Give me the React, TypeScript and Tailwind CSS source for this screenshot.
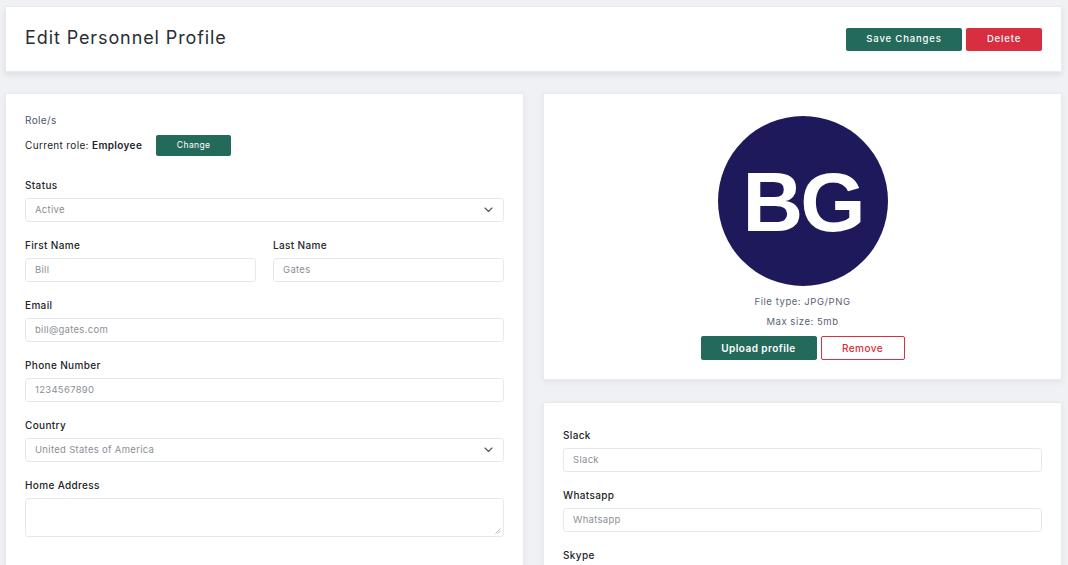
import React from "react";

const font = { fontFamily: "Inter, 'Noto Sans', sans-serif" };

function Chevron() {
  return (
    <svg width="9" height="6" viewBox="0 0 9 6" fill="none" className="shrink-0">
      <path d="M1 1l3.5 3.5L8 1" stroke="#555" strokeWidth="1.1" strokeLinecap="round" strokeLinejoin="round" />
    </svg>
  );
}

function Label({ children }: { children: React.ReactNode }) {
  return <div className="h-[14px] text-[10px] leading-[14px] font-medium tracking-[0.35px] text-[#212529] mb-[6px]">{children}</div>;
}

function Input({ value }: { value: string }) {
  return (
    <div className="h-[24px] border border-[#e6e9ec] rounded-[3px] bg-white px-[9px] flex items-center text-[9.5px] tracking-[0.3px] text-[#8a8f95]">
      {value}
    </div>
  );
}

function Select({ value }: { value: string }) {
  return (
    <div className="h-[24px] border border-[#e6e9ec] rounded-[3px] bg-white pl-[9px] pr-[10px] flex items-center justify-between text-[9.5px] tracking-[0.3px] text-[#8a8f95]">
      <span>{value}</span>
      <Chevron />
    </div>
  );
}

function Field({ label, children }: { label: string; children: React.ReactNode }) {
  return (
    <div>
      <Label>{label}</Label>
      {children}
    </div>
  );
}

export default function App() {
  return (
    <div style={font} className="min-h-screen bg-[#f0f1f5] pl-[5px] pr-[6px] pt-[6px]">
      <div className="h-[66px] bg-white border border-[#e8eaee] shadow-[0_3px_6px_rgba(0,0,0,0.08)] flex items-center justify-between pl-[19px] pr-[19px]">
        <h1 className="text-[18px] text-[#2a2d33] tracking-[0.9px] mt-[-3px]">Edit Personnel Profile</h1>
        <div className="flex gap-[4px]">
          <button className="w-[116px] h-[23px] rounded-[2px] bg-[#246a5b] text-white text-[9.5px] font-medium tracking-[0.85px]">Save Changes</button>
          <button className="w-[76px] h-[23px] rounded-[2px] bg-[#d72f40] text-white text-[9.5px] font-medium tracking-[0.85px]">Delete</button>
        </div>
      </div>

      <div className="grid grid-cols-[519px_519px] gap-[19px] mt-[21px]">
        <div className="bg-white border border-[#e8eaee] shadow-[0_2px_6px_rgba(0,0,0,0.06)] px-[19px] pt-[19px] pb-[30px]">
          <div className="h-[14px] text-[10px] leading-[14px] tracking-[0.35px] text-[#4a5570]">Role/s</div>
          <div className="flex items-center mt-[8px] h-[21px]">
            <span className="text-[10px] tracking-[0.35px] text-[#212529]">Current role: <span className="font-semibold">Employee</span></span>
            <button className="ml-[14px] w-[75px] h-[21px] rounded-[2px] bg-[#246a5b] text-white text-[8.5px] tracking-[0.4px]">Change</button>
          </div>
          <div className="mt-[22px] flex flex-col gap-[16px]">
            <Field label="Status"><Select value="Active" /></Field>
            <div className="grid grid-cols-2 gap-[17px]">
              <Field label="First Name"><Input value="Bill" /></Field>
              <Field label="Last Name"><Input value="Gates" /></Field>
            </div>
            <Field label="Email"><Input value="bill@gates.com" /></Field>
            <Field label="Phone Number"><Input value="1234567890" /></Field>
            <Field label="Country"><Select value="United States of America" /></Field>
            <Field label="Home Address">
              <div className="relative h-[39px] border border-[#e6e9ec] rounded-[3px] bg-white">
                <svg width="6" height="6" viewBox="0 0 6 6" className="absolute right-[2px] bottom-[2px]">
                  <path d="M5.5 0.5L0.5 5.5M5.5 3L3 5.5" stroke="#aaa" strokeWidth="0.8" />
                </svg>
              </div>
            </Field>
          </div>
        </div>

        <div className="flex flex-col gap-[22px]">
          <div className="bg-white border border-[#e8eaee] shadow-[0_2px_6px_rgba(0,0,0,0.06)] pt-[22px] pb-[19px] flex flex-col items-center">
            <div className="w-[170px] h-[170px] rounded-full bg-[#1e195b] flex items-center justify-center">
              <span className="text-white text-[84px] leading-none font-bold tracking-[-3px] mt-[2px]" style={{ fontFamily: "'Liberation Sans', Arial, sans-serif" }}>BG</span>
            </div>
            <div className="mt-[9px] h-[14px] text-[9.5px] leading-[14px] tracking-[0.55px] text-[#5a6275]">File type: JPG/PNG</div>
            <div className="mt-[6px] h-[14px] text-[9.5px] leading-[14px] tracking-[0.55px] text-[#5a6275]">Max size: 5mb</div>
            <div className="mt-[7px] flex gap-[4px]">
              <button className="w-[116px] h-[24px] rounded-[2px] bg-[#246a5b] text-white text-[10px] font-semibold tracking-[0.45px]">Upload profile</button>
              <button className="w-[84px] h-[24px] rounded-[2px] border border-[#d72f40] bg-white text-[#d72f40] text-[10px] font-medium tracking-[0.45px]">Remove</button>
            </div>
          </div>

          <div className="bg-white border border-[#e8eaee] shadow-[0_2px_6px_rgba(0,0,0,0.06)] px-[19px] pt-[25px] pb-[30px] flex flex-col gap-[16px]">
            <Field label="Slack"><Input value="Slack" /></Field>
            <Field label="Whatsapp"><Input value="Whatsapp" /></Field>
            <Field label="Skype"><Input value="Skype" /></Field>
          </div>
        </div>
      </div>
    </div>
  );
}
